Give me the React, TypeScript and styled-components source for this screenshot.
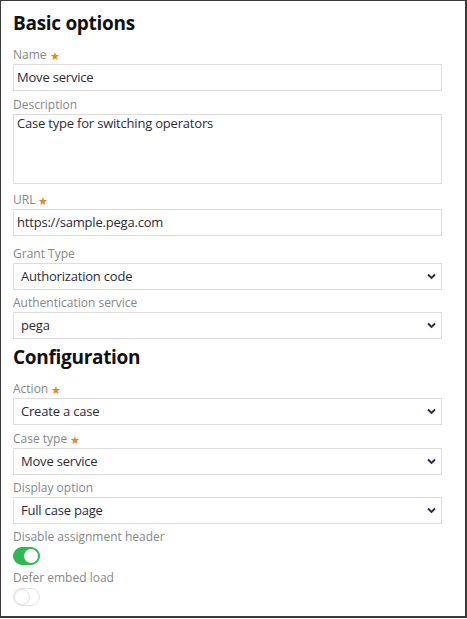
import React from "react";
import styled, { createGlobalStyle } from "styled-components";

const Global = createGlobalStyle`
  html, body { margin: 0; padding: 0; background: #ffffff; }
  body { font-family: "Open Sans", "Noto Sans", sans-serif; }
  * { box-sizing: border-box; }
`;

const Frame = styled.div`
  width: 467px;
  height: 618px;
  border: 1px solid #3a3a3a;
  border-right-width: 2px;
  border-bottom-width: 2px;
  background: #fff;
  padding: 9px 23px 0 12px;
  display: flex;
  flex-direction: column;
`;

const Heading = styled.h2`
  margin: 0 0 11px 0;
  font-size: 19px;
  line-height: 26px;
  font-weight: 700;
  color: #111;
  letter-spacing: -0.3px;
`;

const Field = styled.div<{ $mb?: number }>`
  display: flex;
  flex-direction: column;
  margin-bottom: ${(p) => p.$mb ?? 5}px;
`;

const Label = styled.div`
  font-size: 12px;
  line-height: 16px;
  color: #878787;
  margin-bottom: 1px;
  display: flex;
  align-items: center;
  gap: 3px;
`;

const Star = styled.span`
  color: #e0892a;
  font-size: 11px;
  line-height: 1;
`;

const Box = styled.div<{ $h?: number; $select?: boolean }>`
  height: ${(p) => p.$h ?? 27}px;
  border: 1px solid #dcdcdc;
  background: #fff;
  display: flex;
  align-items: ${(p) => (p.$h ? "flex-start" : "center")};
  padding: ${(p) => (p.$h ? "0 0 0 3px" : p.$select ? "0 5px 0 7px" : "0 0 0 3px")};
  font-size: 13px;
  line-height: 17px;
  letter-spacing: -0.2px;
  color: #2b2b3a;
  justify-content: space-between;
`;

const Chevron = () => (
  <svg width="9" height="7" viewBox="0 0 9 7">
    <path d="M1 1.5 L4.5 5 L8 1.5" fill="none" stroke="#2b2b4a" strokeWidth="1.9" />
  </svg>
);

const ToggleWrap = styled.div<{ $on: boolean }>`
  width: 27px;
  height: 18px;
  border-radius: 9px;
  background: ${(p) => (p.$on ? "#2fb84f" : "#fff")};
  border: 1px solid ${(p) => (p.$on ? "#2fb84f" : "#e2e2e2")};
  position: relative;
  margin-top: 1px;
`;

const Knob = styled.div<{ $on: boolean }>`
  position: absolute;
  top: 0;
  ${(p) => (p.$on ? "right: 0;" : "left: 0;")}
  width: 16px;
  height: 16px;
  border-radius: 50%;
  background: #fff;
  border: 1px solid ${(p) => (p.$on ? "#2fb84f" : "#e2e2e2")};
`;

const Toggle = ({ on }: { on: boolean }) => (
  <ToggleWrap $on={on}>
    <Knob $on={on} />
  </ToggleWrap>
);

type FieldProps = { label: string; value: string; req?: boolean; h?: number; mb?: number };

const TextField = ({ label, value, req, h, mb }: FieldProps) => (
  <Field $mb={mb}>
    <Label>
      {label}
      {req && <Star>★</Star>}
    </Label>
    <Box $h={h}>{value}</Box>
  </Field>
);

const SelectField = ({ label, value, req, mb }: FieldProps) => (
  <Field $mb={mb}>
    <Label>
      {label}
      {req && <Star>★</Star>}
    </Label>
    <Box $select>
      <span>{value}</span>
      <Chevron />
    </Box>
  </Field>
);

const ToggleField = ({ label, on }: { label: string; on: boolean }) => (
  <Field>
    <Label>{label}</Label>
    <Toggle on={on} />
  </Field>
);

export default function App() {
  return (
    <>
      <Global />
      <Frame>
        <Heading>Basic options</Heading>
        <TextField label="Name" value="Move service" req mb={6} />
        <TextField label="Description" value="Case type for switching operators" h={70} mb={8} />
        <TextField label="URL" value="https://sample.pega.com" req mb={10} />
        <SelectField label="Grant Type" value="Authorization code" />
        <SelectField label="Authentication service" value="pega" />
        <Heading>Configuration</Heading>
        <SelectField label="Action" value="Create a case" req mb={6} />
        <SelectField label="Case type" value="Move service" req />
        <SelectField label="Display option" value="Full case page" />
        <ToggleField label="Disable assignment header" on />
        <ToggleField label="Defer embed load" on={false} />
      </Frame>
    </>
  );
}
